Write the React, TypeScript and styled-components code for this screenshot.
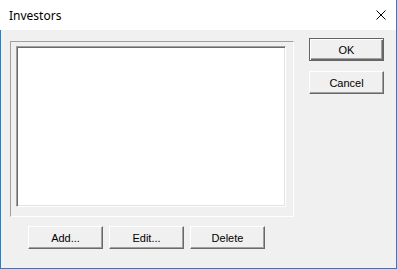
import React from "react";
import styled, { createGlobalStyle } from "styled-components";

const Global = createGlobalStyle`
  html, body { margin: 0; padding: 0; background: #ffffff; }
  * { box-sizing: border-box; }
`;

const Window = styled.div`
  width: 397px;
  height: 269px;
  display: flex;
  flex-direction: column;
  border-right: 1px solid #1883d7;
  border-bottom: 1px solid #1883d7;
  background: #ffffff;
`;

const TitleBar = styled.div`
  height: 30px;
  display: flex;
  align-items: center;
  justify-content: space-between;
  padding: 0 10px 0 9px;
  background: #ffffff;
`;

const Title = styled.span`
  font-family: "Segoe UI", "Noto Sans", sans-serif;
  font-size: 12px;
  color: #000000;
  line-height: 16px;
  margin-top: 1px;
`;

const CloseIcon = styled.svg`
  width: 10px;
  height: 10px;
  display: block;
  margin-top: 0px;
`;

const Body = styled.div`
  flex: 1;
  display: flex;
  gap: 15px;
  background: #f0f0f0;
  border-left: 1px solid #1883d7;
  padding: 8px 0 0 9px;
`;

const LeftColumn = styled.div`
  display: flex;
  flex-direction: column;
  gap: 9px;
  padding-top: 3px;
`;

const Frame = styled.div`
  width: 284px;
  height: 176px;
  border-top: 1px solid #a0a0a0;
  border-left: 1px solid #a0a0a0;
  border-bottom: 1px solid #ffffff;
  border-right: 1px solid #ffffff;
  padding: 4px 7px 9px 5px;
  display: flex;
`;

const ListBox = styled.div`
  flex: 1;
  background: #ffffff;
  border-top: 1px solid #a0a0a0;
  border-left: 1px solid #a0a0a0;
  border-bottom: 1px solid #ffffff;
  border-right: 1px solid #ffffff;
  box-shadow: inset 1px 1px 0 #696969, inset -1px -1px 0 #e3e3e3;
`;

const ButtonRow = styled.div`
  display: flex;
  gap: 6px;
  padding-left: 18px;
`;

const RightColumn = styled.div`
  display: flex;
  flex-direction: column;
  gap: 10px;
`;

const Button = styled.button<{ $default?: boolean }>`
  width: 75px;
  height: 23px;
  margin: 0;
  padding: 0;
  background: #f0f0f0;
  font-family: "Liberation Sans", Arial, sans-serif;
  font-size: 11px;
  color: #000000;
  display: flex;
  align-items: center;
  justify-content: center;
  border-style: solid;
  border-width: 1px;
  border-color: ${(p) =>
    p.$default ? "#646464" : "#ffffff #696969 #696969 #ffffff"};
  box-shadow: ${(p) =>
    p.$default
      ? "inset 1px 1px 0 #ffffff, inset -1px -1px 0 #696969, inset -2px -2px 0 #a0a0a0"
      : "inset -1px -1px 0 #a0a0a0, inset 1px 1px 0 #f0f0f0"};
  cursor: default;
`;

export default function App() {
  return (
    <>
      <Global />
      <Window>
        <TitleBar>
          <Title>Investors</Title>
          <CloseIcon viewBox="0 0 10 10">
            <path d="M0.5 0.5 L9.5 9.5 M9.5 0.5 L0.5 9.5" stroke="#000" strokeWidth="1" fill="none" />
          </CloseIcon>
        </TitleBar>
        <Body>
          <LeftColumn>
            <Frame>
              <ListBox />
            </Frame>
            <ButtonRow>
              <Button>Add...</Button>
              <Button>Edit...</Button>
              <Button>Delete</Button>
            </ButtonRow>
          </LeftColumn>
          <RightColumn>
            <Button $default>OK</Button>
            <Button>Cancel</Button>
          </RightColumn>
        </Body>
      </Window>
    </>
  );
}
